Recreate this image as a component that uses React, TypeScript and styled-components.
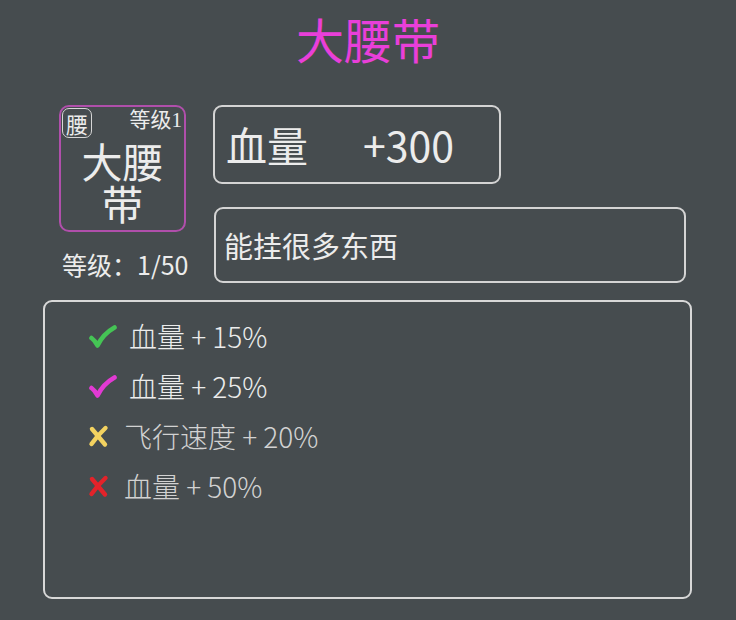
import React from 'react';
import styled, { createGlobalStyle } from 'styled-components';

const GlobalStyle = createGlobalStyle`
    html, body {
        margin: 0;
        padding: 0;
        background: #464c4f;
    }

    body {
        font-family: "Noto Sans CJK SC", "Noto Sans", sans-serif;
        color: #ececec;
    }
`;

const Page = styled.main`
    width: 736px;
    height: 620px;
    box-sizing: border-box;
    padding-top: 14px;
    background: #464c4f;
`;

const Title = styled.h1`
    margin: 0;
    font-size: 48px;
    font-weight: 400;
    line-height: 48px;
    text-align: center;
    color: #e93fd9;
`;

const TopRow = styled.section`
    display: flex;
    margin-top: 43px;
    padding-left: 59px;
    gap: 25px;
`;

const ItemColumn = styled.div`
    display: flex;
    flex-direction: column;
    width: 129px;
`;

const ItemCard = styled.div`
    position: relative;
    width: 127px;
    height: 127px;
    box-sizing: border-box;
    border: 2.5px solid #b04fab;
    border-radius: 10px;
    display: flex;
    align-items: center;
    justify-content: center;
    padding-top: 24px;
`;

const SlotBadge = styled.span`
    position: absolute;
    top: 1px;
    left: 1px;
    width: 30px;
    height: 30px;
    box-sizing: border-box;
    border: 1.5px solid #d6d6d6;
    border-radius: 7px;
    display: flex;
    align-items: center;
    justify-content: center;
    font-size: 22px;
    line-height: 1;
`;

const CardLevel = styled.span`
    position: absolute;
    top: 2px;
    right: 2px;
    font-family: "Liberation Serif", "Noto Sans CJK SC", serif;
    font-size: 21px;
    line-height: 22px;
`;

const ItemName = styled.div`
    width: 90px;
    text-align: center;
    font-size: 41px;
    line-height: 42px;
`;

const LevelText = styled.div`
    margin-top: 16px;
    padding-left: 3px;
    font-size: 25px;
    line-height: 32px;
    white-space: nowrap;
`;

const InfoColumn = styled.div`
    display: flex;
    flex-direction: column;
    gap: 23px;
    width: 474px;
`;

const Box = styled.div<{ $width: number; $height: number; $shift?: number }>`
    width: ${(p) => p.$width}px;
    height: ${(p) => p.$height}px;
    margin-left: ${(p) => p.$shift ?? 0}px;
    box-sizing: border-box;
    border: 2px solid #d4d4d4;
    border-radius: 9px;
    display: flex;
    align-items: center;
`;

const StatText = styled.div`
    padding-left: 11px;
    font-size: 41px;
    line-height: 1;
    white-space: pre;
`;

const DescText = styled.div`
    padding-left: 8px;
    font-size: 29px;
    line-height: 1;
`;

const EffectsBox = styled.section`
    margin: 17px 0 0 43px;
    width: 649px;
    height: 299px;
    box-sizing: border-box;
    border: 2px solid #d8d8d8;
    border-radius: 9px;
    padding: 9px 0 0 42px;
`;

const EffectRow = styled.div<{ $dim?: boolean }>`
    display: flex;
    align-items: center;
    height: 50px;
    font-size: 28px;
    font-weight: 300;
    color: ${(p) => (p.$dim ? '#d2d2d2' : '#ececec')};
`;

const MarkIcon = styled.svg<{ $gap: number }>`
    flex: none;
    margin-right: ${(p) => p.$gap}px;
`;

const Check = ({ color }: { color: string }) => (
    <MarkIcon $gap={12} width="30" height="24" viewBox="0 0 30 24">
        <path
            d="M4.5 14 Q8 16.5 10.5 21.5 Q16 10 27.5 3.5"
            fill="none"
            stroke={color}
            strokeWidth="4.6"
            strokeLinecap="round"
            strokeLinejoin="round"
        />
    </MarkIcon>
);

const Cross = ({ color }: { color: string }) => (
    <MarkIcon $gap={14} width="23" height="24" viewBox="0 0 23 24">
        <g fill="none" stroke={color} strokeWidth="4.4" strokeLinecap="round">
            <path d="M5 5 Q11 12 18 20.5" />
            <path d="M18.5 4 Q10 12 4.5 20" />
        </g>
    </MarkIcon>
);

const effects = [
    { kind: 'check', color: '#45c455', text: '血量 + 15%' },
    { kind: 'check', color: '#e23ad3', text: '血量 + 25%' },
    { kind: 'cross', color: '#f3d260', text: '飞行速度 + 20%', dim: true },
    { kind: 'cross', color: '#e3232a', text: '血量 + 50%', dim: true },
];

const App = () => {
    return (
        <>
        <GlobalStyle />
        <Page>
            <Title>大腰带</Title>
            <TopRow>
                <ItemColumn>
                    <ItemCard>
                        <SlotBadge>腰</SlotBadge>
                        <CardLevel>等级1</CardLevel>
                        <ItemName>大腰带</ItemName>
                    </ItemCard>
                    <LevelText>等级：1/50</LevelText>
                </ItemColumn>
                <InfoColumn>
                    <Box $width={288} $height={79}>
                        <StatText>{'血量      +300'}</StatText>
                    </Box>
                    <Box $width={472} $height={76} $shift={1}>
                        <DescText>能挂很多东西</DescText>
                    </Box>
                </InfoColumn>
            </TopRow>
            <EffectsBox>
                {effects.map((e) => (
                    <EffectRow key={e.text} $dim={e.dim}>
                        {e.kind === 'check' ? <Check color={e.color} /> : <Cross color={e.color} />}
                        {e.text}
                    </EffectRow>
                ))}
            </EffectsBox>
        </Page>
        </>
    );
};

export default App;
